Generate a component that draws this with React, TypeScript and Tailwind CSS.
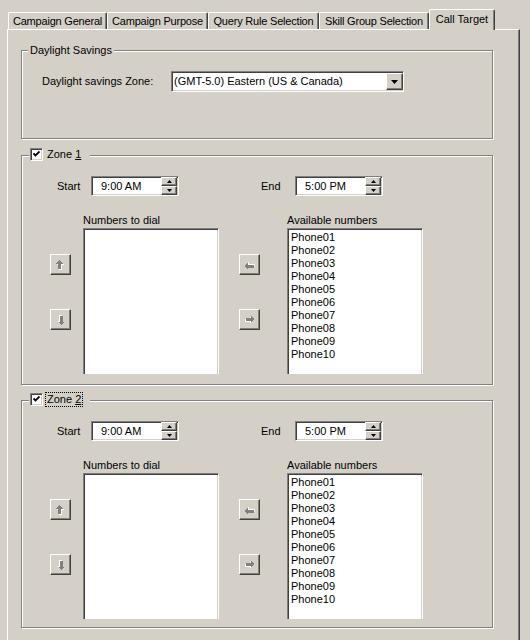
import React from "react";

const raised =
  "border border-t-white border-l-white border-r-[#404040] border-b-[#404040] shadow-[inset_-1px_-1px_0_#808080] bg-[#d4d0c8]";
const sunken =
  "border border-t-[#808080] border-l-[#808080] border-r-white border-b-white shadow-[inset_1px_1px_0_#404040,inset_-1px_-1px_0_#d4d0c8] bg-white";
const etched = "border border-[#808080] shadow-[inset_1px_1px_0_#fff,1px_1px_0_#fff]";

const tabs = [
  { label: "Campaign General", w: "w-[99px]" },
  { label: "Campaign Purpose", w: "w-[101px]" },
  { label: "Query Rule Selection", w: "w-[111px]" },
  { label: "Skill Group Selection", w: "w-[110px]" },
];

const phones = ["Phone01", "Phone02", "Phone03", "Phone04", "Phone05", "Phone06", "Phone07", "Phone08", "Phone09", "Phone10"];

function Arrow({ dir }: { dir: "up" | "down" | "left" | "right" }) {
  const rot = { up: 0, down: 180, left: 270, right: 90 }[dir];
  return (
    <svg width="9" height="10" viewBox="0 0 9 10" shapeRendering="crispEdges" style={{ transform: `rotate(${rot}deg)` }}>
      <polygon points="4.5,1 8,4.5 6,4.5 6,10 3,10 3,4.5 1,4.5" fill="#fff" />
      <polygon points="3.5,0 7,3.5 5,3.5 5,9 2,9 2,3.5 0,3.5" fill="#808080" />
    </svg>
  );
}

function ArrowButton({ dir }: { dir: "up" | "down" | "left" | "right" }) {
  return (
    <div className={`w-[21px] h-[21px] flex items-center justify-center ${raised}`}>
      <Arrow dir={dir} />
    </div>
  );
}

function TimeSpinner({ value }: { value: string }) {
  return (
    <div className={`w-[88px] h-[20px] flex items-center ${sunken}`}>
      <span className="flex-1 pl-[9px] leading-[13px]">{value}</span>
      <div className="flex flex-col mr-[1px]">
        <div className={`w-[16px] h-[9px] flex items-center justify-center ${raised}`}>
          <svg width="5" height="3" viewBox="0 0 5 3">
            <polygon points="2.5,0 5,3 0,3" fill="#000" />
          </svg>
        </div>
        <div className={`w-[16px] h-[9px] flex items-center justify-center ${raised}`}>
          <svg width="5" height="3" viewBox="0 0 5 3">
            <polygon points="0,0 5,0 2.5,3" fill="#000" />
          </svg>
        </div>
      </div>
    </div>
  );
}

function Checkbox() {
  return (
    <div className={`w-[13px] h-[13px] flex items-center justify-center ${sunken}`}>
      <svg width="7" height="7" viewBox="0 0 7 7">
        <path d="M0.5 2.5 L2.5 4.5 L6.5 0.5" stroke="#000" strokeWidth="1.8" fill="none" />
      </svg>
    </div>
  );
}

function ListBox({ label, items }: { label: string; items: string[] }) {
  return (
    <div className="flex flex-col w-[136px]">
      <div className="h-[14px] leading-[13px]">{label}</div>
      <div className="h-[146px] border border-b-0 border-t-[#808080] border-l-[#808080] border-r-white shadow-[inset_1px_1px_0_#404040,inset_-1px_0_0_#d4d0c8] bg-white pt-[2px] pl-[3px]">
        {items.map((p) => (
          <div key={p} className="leading-[13px] h-[13px]">
            {p}
          </div>
        ))}
      </div>
    </div>
  );
}

function Zone({ n, focused, height, top }: { n: number; focused?: boolean; height: string; top: string }) {
  return (
    <div className={`relative ${etched} ${height} ${top} w-[472px]`}>
      <div className="absolute left-[7px] top-[-8px] flex items-center bg-[#d4d0c8] pl-[1px] pr-[8px]">
        <Checkbox />
        <span
          className={`ml-[3px] leading-[13px] px-[1px] ${focused ? "outline outline-1 outline-dotted outline-black" : ""}`}
        >
          Zone <span className="underline">{n}</span>
        </span>
      </div>
      <div className="flex items-center pt-[20px] pl-[35px]">
        <span className="w-[34px]">Start</span>
        <TimeSpinner value="9:00 AM" />
        <span className="w-[34px] ml-[82px]">End</span>
        <TimeSpinner value="5:00 PM" />
      </div>
      <div className="flex mt-[18px] pl-[28px]">
        <div className="flex flex-col w-[21px] pt-[40px] gap-[34px]">
          <ArrowButton dir="up" />
          <ArrowButton dir="down" />
        </div>
        <div className="ml-[12px]">
          <ListBox label="Numbers to dial" items={[]} />
        </div>
        <div className="flex flex-col w-[21px] ml-[20px] pt-[40px] gap-[34px]">
          <ArrowButton dir="left" />
          <ArrowButton dir="right" />
        </div>
        <div className="ml-[27px]">
          <ListBox label="Available numbers" items={phones} />
        </div>
      </div>
    </div>
  );
}

export default function App() {
  return (
    <div className="w-[530px] h-[640px] overflow-hidden bg-[#d4d0c8] text-black text-[11px] font-['Liberation_Sans',Arial,sans-serif] flex flex-col">
      <div className="flex items-end pl-[8px] pt-[9px]">
        {tabs.map((t) => (
          <div
            key={t.label}
            className={`${t.w} h-[17px] flex items-center justify-center pt-[1px] tracking-[-0.2px] rounded-t-[2px] border-t border-l border-t-white border-l-white border-r border-r-[#404040] shadow-[inset_-1px_0_0_#808080]`}
          >
            {t.label}
          </div>
        ))}
        <div className="relative z-10 w-[66px] h-[21px] -mb-px bg-[#d4d0c8] flex items-center justify-center pb-[2px] rounded-t-[2px] border-t border-l border-t-white border-l-white border-r border-r-[#404040] shadow-[inset_-1px_0_0_#808080]">
          Call Target
        </div>
      </div>
      <div className="ml-[7px] w-[513px] flex-1 border-t border-l border-t-white border-l-white border-r border-r-[#404040] shadow-[inset_-1px_0_0_#808080] pl-[13px]">
        <div className={`relative ${etched} w-[472px] h-[89px] mt-[20px]`}>
          <div className="absolute left-[6px] top-[-7px] bg-[#d4d0c8] px-[2px] leading-[13px]">Daylight Savings</div>
          <div className="flex items-center pt-[20px] pl-[20px]">
            <span className="w-[129px]">Daylight savings Zone:</span>
            <div className={`w-[233px] h-[21px] flex items-center ${sunken}`}>
              <span className="flex-1 pl-[2px] leading-[13px]">(GMT-5.0) Eastern (US &amp; Canada)</span>
              <div className={`w-[17px] h-[17px] flex items-center justify-center ${raised}`}>
                <svg width="7" height="4" viewBox="0 0 7 4">
                  <polygon points="0,0 7,0 3.5,4" fill="#000" />
                </svg>
              </div>
            </div>
          </div>
        </div>
        <Zone n={1} height="h-[230px]" top="mt-[16px]" />
        <Zone n={2} focused height="h-[228px]" top="mt-[15px]" />
      </div>
    </div>
  );
}
